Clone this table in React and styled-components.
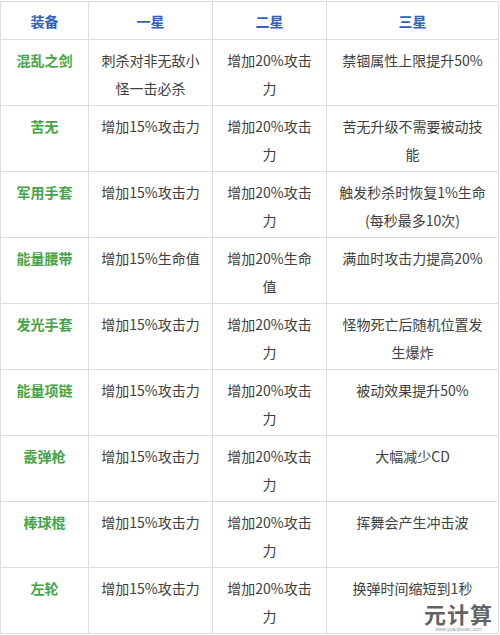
import React from 'react';
import styled, { createGlobalStyle } from 'styled-components';

const GlobalStyle = createGlobalStyle`
  html, body {
    margin: 0;
    padding: 0;
    background: #fff;
  }
  body {
    font-family: "Noto Sans CJK SC", "Noto Sans", sans-serif;
  }
`;

const Page = styled.div`
  position: relative;
  width: 500px;
  height: 635px;
  padding-top: 1px;
  box-sizing: border-box;
  overflow: hidden;
`;

const Grid = styled.div`
  display: grid;
  grid-template-columns: 87px 123px 113px 171px;
  grid-template-rows: 37px;
  grid-auto-rows: 65px;
  gap: 1px;
  padding: 1px;
  width: max-content;
  background: #dcdcdc;
`;

const HeadCell = styled.div`
  background: #fff;
  display: flex;
  align-items: center;
  justify-content: center;
  font-size: 14px;
  font-weight: 700;
  color: #2f62c0;
`;

const Cell = styled.div`
  background: #fff;
  padding: 6px 10px 0;
  text-align: center;
  font-size: 14px;
  line-height: 28px;
  color: ${(p) => (p.$name ? '#45a445' : '#404040')};
  font-weight: ${(p) => (p.$name ? 700 : 400)};
`;

const Watermark = styled.div`
  position: absolute;
  right: 7px;
  bottom: 3px;
  display: flex;
  flex-direction: column;
  align-items: center;
  gap: 3px;
`;

const MarkText = styled.span`
  font-size: 22px;
  font-weight: 700;
  line-height: 22px;
  color: rgba(70, 70, 70, 0.85);
  letter-spacing: 1px;
  text-shadow: 0 0 2px #fff, 0 0 2px #fff;
`;

const MarkSub = styled.span`
  font-family: "Liberation Sans", sans-serif;
  font-size: 5px;
  line-height: 5px;
  color: rgba(120, 120, 120, 0.8);
`;

const rows = [
  ['混乱之剑', '刺杀对非无敌小怪一击必杀', '增加20%攻击力', '禁锢属性上限提升50%'],
  ['苦无', '增加15%攻击力', '增加20%攻击力', '苦无升级不需要被动技能'],
  ['军用手套', '增加15%攻击力', '增加20%攻击力', '触发秒杀时恢复1%生命(每秒最多10次)'],
  ['能量腰带', '增加15%生命值', '增加20%生命值', '满血时攻击力提高20%'],
  ['发光手套', '增加15%攻击力', '增加20%攻击力', '怪物死亡后随机位置发生爆炸'],
  ['能量项链', '增加15%攻击力', '增加20%攻击力', '被动效果提升50%'],
  ['霰弹枪', '增加15%攻击力', '增加20%攻击力', '大幅减少CD'],
  ['棒球棍', '增加15%攻击力', '增加20%攻击力', '挥舞会产生冲击波'],
  ['左轮', '增加15%攻击力', '增加20%攻击力', '换弹时间缩短到1秒'],
];

const heads = ['装备', '一星', '二星', '三星'];

export default function App() {
  return (
    <Page>
      <GlobalStyle />
      <Grid>
        {heads.map((h) => (
          <HeadCell key={h}>{h}</HeadCell>
        ))}
        {rows.map((row) =>
          row.map((text, i) => (
            <Cell key={row[0] + i} $name={i === 0}>
              {text}
            </Cell>
          ))
        )}
      </Grid>
      <Watermark>
        <MarkText>元计算</MarkText>
        <MarkSub>www.yuanjisuan.com</MarkSub>
      </Watermark>
    </Page>
  );
}
